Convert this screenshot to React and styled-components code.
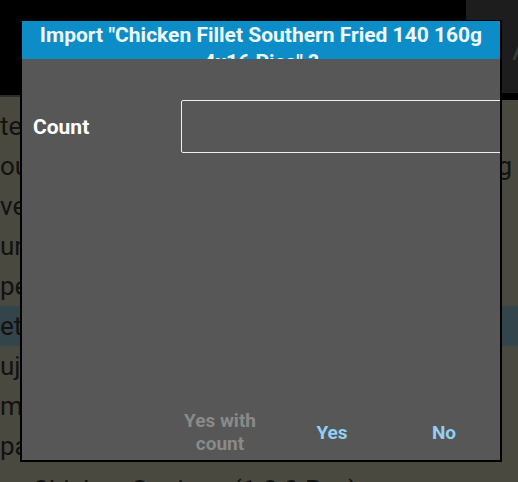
import React from 'react';
import styled, { createGlobalStyle } from 'styled-components';

const GlobalStyle = createGlobalStyle`
  html, body {
    margin: 0;
    padding: 0;
    background: #4a4940;
    font-family: Roboto, "Noto Sans", sans-serif;
    overflow: hidden;
  }
`;

const Screen = styled.div`
  position: relative;
  width: 518px;
  height: 482px;
  overflow: hidden;
  background: #4a4940;
`;

const TopBar = styled.div`
  height: 95px;
  background: #000;
  border-bottom: 2px solid #2c2c2c;
`;

const SidePanel = styled.div`
  position: absolute;
  top: 0;
  right: 0;
  width: 52px;
  height: 100px;
  background: #1d1d1d;
  border-bottom: 7px solid #000;
  color: #3a3a3a;
  font-size: 30px;
  line-height: 100px;
  padding-left: 46px;
  box-sizing: border-box;
`;

const List = styled.div`
  padding-top: 9px;
`;

const Row = styled.div`
  height: 40px;
  box-sizing: border-box;
  display: flex;
  align-items: center;
  justify-content: space-between;
  padding-top: ${({ low }) => (low ? 8 : 0)}px;
  background: ${({ selected }) => (selected ? '#34444b' : 'transparent')};
  color: #121210;
  font-size: 26px;
  white-space: nowrap;
  overflow: hidden;
`;

const RowText = styled.span`
  margin-left: ${({ indent }) => indent || 0}px;
`;

const RowTail = styled.span`
  margin-right: 6px;
`;

const Dialog = styled.div`
  position: absolute;
  top: 20px;
  left: 20px;
  width: 482px;
  height: 442px;
  box-sizing: border-box;
  border: 2px solid #000;
  border-top-width: 1px;
  background: #575757;
  display: flex;
  flex-direction: column;
  overflow: hidden;
`;

const Header = styled.div`
  height: 38px;
  flex-shrink: 0;
  background: #0c8dc7;
  overflow: hidden;
  color: #eef8ff;
  font-weight: 700;
  font-size: 21px;
  line-height: 27px;
  text-align: center;
  padding: 1px 10px 0;
  box-sizing: border-box;
`;

const Body = styled.div`
  flex: 1;
  padding-top: 41px;
`;

const Field = styled.div`
  display: flex;
  align-items: center;
`;

const Label = styled.div`
  width: 159px;
  box-sizing: border-box;
  padding-left: 11px;
  color: #fff;
  font-weight: 700;
  font-size: 21px;
  flex-shrink: 0;
`;

const Input = styled.div`
  flex-shrink: 0;
  width: 360px;
  height: 53px;
  box-sizing: border-box;
  border: 1.5px solid #f0f0f0;
  border-radius: 2px;
`;

const Buttons = styled.div`
  display: flex;
  justify-content: flex-end;
  height: 60px;
`;

const Button = styled.div`
  width: 112px;
  display: flex;
  align-items: center;
  justify-content: center;
  text-align: center;
  font-weight: 700;
  font-size: 19px;
  line-height: 23px;
  color: ${({ disabled }) => (disabled ? '#8a8a8a' : '#8fd0f4')};
  padding-top: 4px;
`;

const rows = [
  { text: 'te' },
  { text: 'ou', tail: 'g' },
  { text: 've' },
  { text: 'un' },
  { text: 'pe' },
  { text: 'et', selected: true },
  { text: 'uj' },
  { text: 'm' },
  { text: 'pa' },
  { text: 'Chicken Goujons (1 0 0 Pcs)', indent: 32, low: true },
];

const App = () => (
  <Screen>
    <GlobalStyle />
    <TopBar />
    <SidePanel>A</SidePanel>
    <List>
      {rows.map((r, i) => (
        <Row key={i} selected={r.selected} low={r.low}>
          <RowText indent={r.indent}>{r.text}</RowText>
          {r.tail && <RowTail>{r.tail}</RowTail>}
        </Row>
      ))}
    </List>
    <Dialog>
      <Header>Import "Chicken Fillet Southern Fried 140 160g 4x16 Pics" ?</Header>
      <Body>
        <Field>
          <Label>Count</Label>
          <Input />
        </Field>
      </Body>
      <Buttons>
        <Button disabled>Yes with<br />count</Button>
        <Button>Yes</Button>
        <Button>No</Button>
      </Buttons>
    </Dialog>
  </Screen>
);

export default App;
